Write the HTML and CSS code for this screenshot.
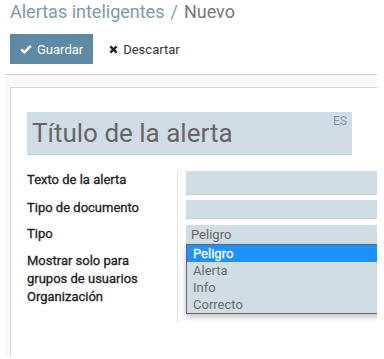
FILE: index.html
```html
<!DOCTYPE html>
<html lang="es">

<head>
    <meta charset="UTF-8">
    <meta name="viewport" content="width=device-width, initial-scale=1.0">
    <title>Alertas inteligentes / Nuevo</title>

    <link rel="stylesheet" href="styles.css">

</head>

<body>
    <!-- Control panel -->
    <div class="control-panel">
        <ol class="breadcrumb">
            <li><a href="#">Alertas inteligentes</a></li>
            <li class="active">Nuevo</li>
        </ol>
        <div class="cp-buttons">
            <button class="btn btn-primary">
                <svg class="icon" viewBox="0 0 12 12" width="12" height="12"><path d="M1.2 6.4 L4.4 9.4 L10.8 2.8" fill="none" stroke="#fff" stroke-width="2.4"/></svg>
                Guardar
            </button>
            <button class="btn btn-link">
                <svg class="icon" viewBox="0 0 10 10" width="9" height="9"><path d="M1.5 1.5 L8.5 8.5 M8.5 1.5 L1.5 8.5" fill="none" stroke="#222" stroke-width="2.6"/></svg>
                Descartar
            </button>
        </div>
    </div>

    <!-- Form view -->
    <div class="form-view">
        <div class="sheet">
            <div class="title-field">
                <span class="title-text">Título de la alerta</span>
                <span class="lang">ES</span>
            </div>

            <div class="group">
                <div class="label row-1">Texto de la alerta</div>
                <div class="cell row-1"><div class="input input-tall"></div></div>

                <div class="label row-2">Tipo de documento</div>
                <div class="cell row-2"><div class="input input-short"></div></div>

                <div class="label row-3">Tipo</div>
                <div class="cell row-3">
                    <div class="select">
                        Peligro
                        <ul class="dropdown">
                            <li class="selected">Peligro</li>
                            <li>Alerta</li>
                            <li>Info</li>
                            <li>Correcto</li>
                        </ul>
                    </div>
                </div>

                <div class="label row-4">Mostrar solo para grupos de usuarios</div>
                <div class="cell row-4"></div>

                <div class="label row-5">Organización</div>
                <div class="cell row-5"></div>
            </div>
        </div>
    </div>
</body>

</html>
```

FILE: styles.css
```css
body {
    margin: 0;
    font-family: Roboto, "Liberation Sans", sans-serif;
    font-size: 13px;
    background: #fff;
    color: #333;
    width: 384px;
    height: 359px;
    overflow: hidden;
}

/* Control panel */
.control-panel {
    padding: 0 10px;
}

.breadcrumb {
    list-style: none;
    margin: 0;
    padding: 0;
    display: flex;
    font-size: 18px;
    line-height: 24px;
    color: #777;
}

.breadcrumb a {
    color: #7c9bb2;
    text-decoration: none;
}

.breadcrumb li + li::before {
    content: "/";
    color: #8a9aa6;
    padding: 0 6px 0 6px;
}

.cp-buttons {
    display: flex;
    align-items: center;
    margin-top: 10px;
    gap: 4px;
}

.btn {
    display: flex;
    align-items: center;
    gap: 5px;
    height: 30px;
    border: none;
    font-family: inherit;
    font-size: 13px;
    padding: 0 10px;
    cursor: pointer;
}

.btn-primary {
    background: #5f8aa6;
    color: #fff;
}

.btn-link {
    background: none;
    color: #333;
    padding-left: 12px;
}

/* Form view */
.form-view {
    margin: 10px 7px 0 5px;
    height: 281px;
    border-top: 1px solid #cfcfcf;
    background: #f9f9f9;
    overflow: hidden;
}

.sheet {
    width: 420px;
    margin: 12px 0 0 5px;
    padding: 24px 0 0 16px;
    height: 400px;
    background: #fff;
    border: 1px solid #d9d9d9;
    border-right: none;
}

.title-field {
    position: relative;
    width: 325px;
    height: 43px;
    background: #d1dde4;
    border-bottom: 1px solid #bfcbd2;
    box-sizing: border-box;
}

.title-text {
    display: block;
    padding-left: 5px;
    font-size: 26px;
    line-height: 43px;
    color: #666;
}

.lang {
    position: absolute;
    top: 3px;
    right: 5px;
    font-size: 12px;
    line-height: 13px;
    color: #7595ad;
}

/* Field group */
.group {
    display: grid;
    grid-template-columns: 151px 1fr;
    margin-top: 16px;
}

.label {
    border-right: 1px solid #e2e2e2;
    line-height: 18px;
    color: #222;
    -webkit-text-stroke: 0.3px #222;
    padding-right: 20px;
}

.cell {
    padding-left: 8px;
}

.row-1 { height: 28px; }
.row-2 { height: 26px; }
.row-3 { height: 27px; }
.row-4 { height: 36px; }
.row-5 { height: 34px; }

.input {
    background: #d1dde4;
    border-bottom: 1px solid #c3cfd6;
}

.input-tall {
    height: 23px;
}

.input-short {
    margin-top: 1px;
    height: 18px;
}

.select {
    position: relative;
    height: 19px;
    line-height: 19px;
    padding-left: 5px;
    background: #d1dde4;
    color: #666;
}

.dropdown {
    position: absolute;
    top: 19px;
    left: 0;
    width: 240px;
    margin: 0;
    padding: 0;
    list-style: none;
    background: #d1dde4;
    border: 1px solid #666;
    box-shadow: 0 3px 6px rgba(0, 0, 0, 0.25);
}

.dropdown li {
    height: 17px;
    line-height: 17px;
    padding-left: 6px;
    color: #6a6a6a;
}

.dropdown li.selected {
    background: #1e90ff;
    color: #fff;
    -webkit-text-stroke: 0.3px #fff;
}
```
